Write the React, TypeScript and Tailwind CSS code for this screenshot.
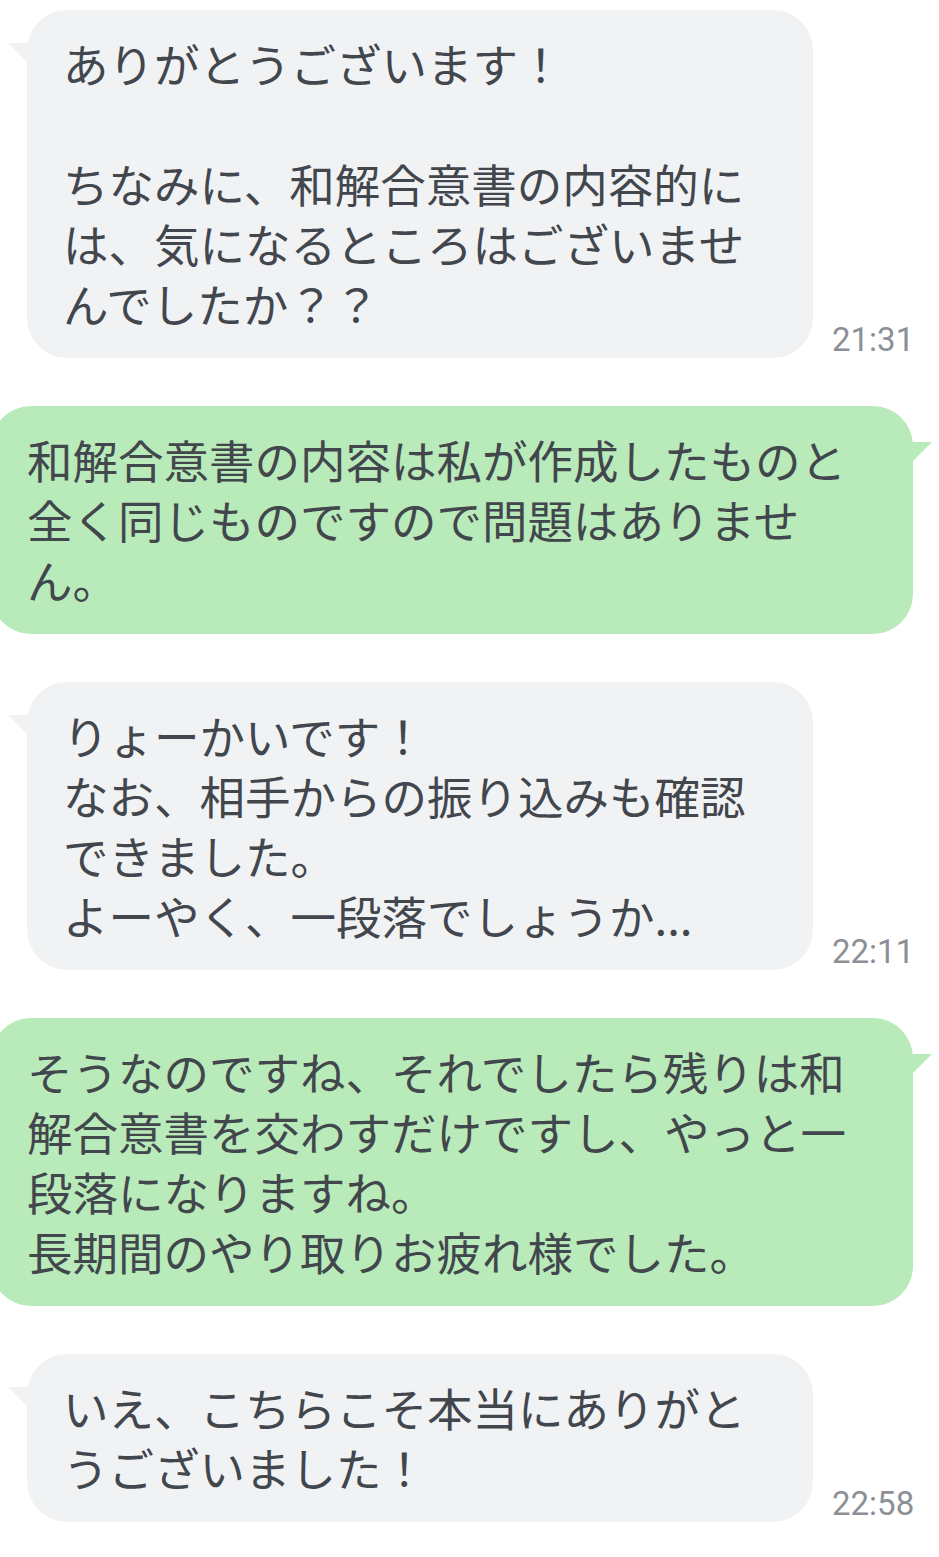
const messages = [
  {
    side: 'left',
    text: 'ありがとうございます！\n\nちなみに、和解合意書の内容的に\nは、気になるところはございませ\nんでしたか？？',
    time: '21:31',
  },
  {
    side: 'right',
    text: '和解合意書の内容は私が作成したものと\n全く同じものですので問題はありませ\nん。',
  },
  {
    side: 'left',
    text: 'りょーかいです！\nなお、相手からの振り込みも確認\nできました。\nよーやく、一段落でしょうか...',
    time: '22:11',
  },
  {
    side: 'right',
    text: 'そうなのですね、それでしたら残りは和\n解合意書を交わすだけですし、やっと一\n段落になりますね。\n長期間のやり取りお疲れ様でした。',
  },
  {
    side: 'left',
    text: 'いえ、こちらこそ本当にありがと\nうございました！',
    time: '22:58',
  },
]

function LeftBubble({ text, time }: { text: string; time?: string }) {
  return (
    <div className="flex items-end pl-[27px]">
      <div className="relative w-[786px] shrink-0 rounded-[40px] bg-[#f1f2f4] pl-[36px] pr-[30px] pt-[23px] pb-[25px]">
        <svg className="absolute left-[-19px] top-[33px]" width="22" height="22" viewBox="0 0 22 22">
          <polygon points="0,0 22,0 22,22" fill="#f1f2f4" />
        </svg>
        <p className="whitespace-pre-line text-[45.5px] leading-[60px] text-[#42464d]">{text}</p>
      </div>
      {time && (
        <span className="ml-[19px] mb-[1px] font-['Roboto',sans-serif] text-[33px] leading-[34px] text-[#8b9096]">
          {time}
        </span>
      )}
    </div>
  )
}

function RightBubble({ text }: { text: string }) {
  return (
    <div className="flex justify-end pr-[26px]">
      <div className="relative w-[922px] shrink-0 rounded-[40px] bg-[#b9eab9] pl-[36px] pr-[30px] pt-[23px] pb-[25px]">
        <svg className="absolute right-[-19px] top-[36px]" width="22" height="22" viewBox="0 0 22 22">
          <polygon points="0,0 22,0 0,22" fill="#b9eab9" />
        </svg>
        <p className="whitespace-pre-line text-[45.5px] leading-[60px] text-[#42464d]">{text}</p>
      </div>
    </div>
  )
}

export default function App() {
  return (
    <main className="w-[939px] min-h-[1557px] overflow-hidden bg-white pt-[10px] font-['Noto_Sans_CJK_JP','Noto_Sans',sans-serif]">
      <div className="flex flex-col gap-[48px]">
        {messages.map((m, i) =>
          m.side === 'left' ? (
            <LeftBubble key={i} text={m.text} time={m.time} />
          ) : (
            <RightBubble key={i} text={m.text} />
          )
        )}
      </div>
    </main>
  )
}
